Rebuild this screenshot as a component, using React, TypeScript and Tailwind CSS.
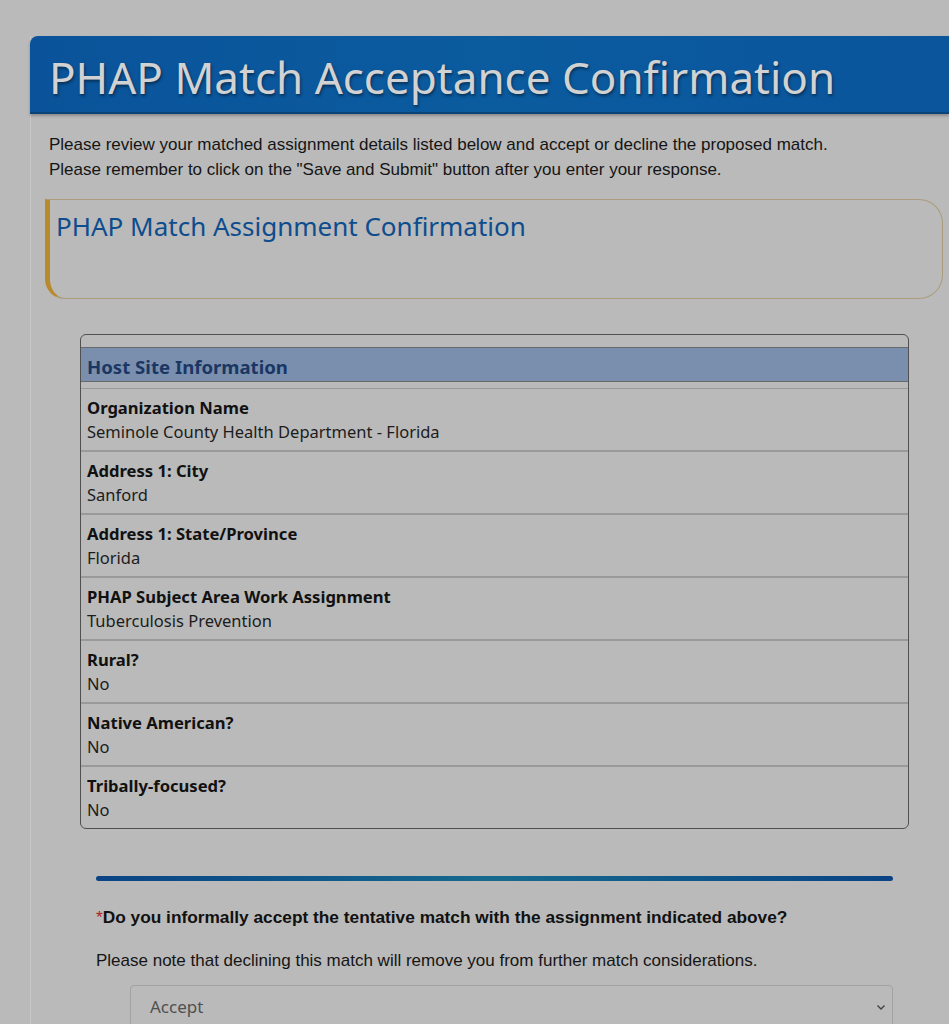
import React from "react";

const seg = { fontFamily: '"Noto Sans", "Open Sans", sans-serif' };
const arial = { fontFamily: '"Liberation Sans", Arial, sans-serif' };

const rows: [string, string][] = [
  ["Organization Name", "Seminole County Health Department - Florida"],
  ["Address 1: City", "Sanford"],
  ["Address 1: State/Province", "Florida"],
  ["PHAP Subject Area Work Assignment", "Tuberculosis Prevention"],
  ["Rural?", "No"],
  ["Native American?", "No"],
  ["Tribally-focused?", "No"],
];

export default function App() {
  return (
    <div className="min-h-screen w-full bg-[#bababa] overflow-hidden">
      <div className="pt-[36px] pl-[30px]">
        <div className="border-l border-[#c8c8c8] min-h-[988px]">
          <div className="h-[78px] -ml-px rounded-tl-[8px] bg-gradient-to-r from-[#0a539a] via-[#0b5b9f] to-[#0a559c] border-b-2 border-[#0a4378] shadow-[0_2px_3px_rgba(0,0,0,0.25)] flex items-center pl-[19px] pt-[5px]">
            <h1
              className="text-[44px] leading-none text-[#d2d2d2] [text-shadow:1px_2px_3px_rgba(0,0,0,0.45)] whitespace-nowrap"
              style={seg}
            >
              PHAP Match Acceptance Confirmation
            </h1>
          </div>
          <div className="pl-[18px] pt-[18px] text-[17px] leading-[25px] text-[#151515]" style={arial}>
            <p>Please review your matched assignment details listed below and accept or decline the proposed match.</p>
            <p>Please remember to click on the "Save and Submit" button after you enter your response.</p>
          </div>
          <div className="ml-[14px] mr-[6px] mt-[17px] h-[100px] rounded-r-[24px] rounded-bl-[20px] border border-[#ab9c7c] border-l-[5px] border-l-[#b98a2b] pl-[6px] pt-[6px]">
            <h2 className="text-[26px] leading-[40px] text-[#0d4d8e]" style={seg}>
              PHAP Match Assignment Confirmation
            </h2>
          </div>
          <div className="ml-[49px] mt-[35px] w-[829px] rounded-[6px] border border-[#505050] pt-[12px]" style={seg}>
            <div className="h-[35px] bg-[#7a8fae] border-y border-[#6a6a6a] flex items-center px-[6px] pt-[4px]">
              <span className="text-[18.6px] font-bold text-[#1a3764]">Host Site Information</span>
            </div>
            <div className="mt-[6px] border-t border-[#9a9a9a]">
              {rows.map(([label, value], i) => (
                <div
                  key={label}
                  className={`px-[6px] pt-[7px] pb-[6px] ${i < rows.length - 1 ? "border-b-2 border-[#9a9a9a]" : ""}`}
                >
                  <div className="text-[16.6px] leading-[24px] font-bold text-[#111]">{label}</div>
                  <div className="text-[16.5px] leading-[24px] text-[#1c1c1c]">{value}</div>
                </div>
              ))}
            </div>
          </div>
          <div className="ml-[65px] mt-[47px] w-[797px] h-[5px] rounded-full bg-gradient-to-r from-[#0b4384] via-[#176a8e] to-[#0b4384]" />
          <div className="ml-[65px] mt-[24px]" style={arial}>
            <p className="text-[17.3px] leading-[24px] font-bold text-[#111]">
              <span className="text-[#b02020] font-normal">*</span>Do you informally accept the tentative match with the assignment indicated above?
            </p>
            <p className="mt-[20px] text-[17px] leading-[24px] text-[#151515]">
              Please note that declining this match will remove you from further match considerations.
            </p>
          </div>
          <div className="ml-[99px] mt-[12px] w-[763px] h-[46px] rounded-[4px] border border-[#a3a3a3] flex items-start justify-between pl-[19px] pr-[5px] pt-[8px]">
            <span className="text-[17px] leading-[26px] text-[#505050]" style={seg}>Accept</span>
            <svg className="mt-[7px]" width="12" height="12" viewBox="0 0 12 12" fill="none" stroke="#444" strokeWidth="1.4">
              <path d="M2.5 4.5 L6 8 L9.5 4.5" />
            </svg>
          </div>
        </div>
      </div>
    </div>
  );
}
